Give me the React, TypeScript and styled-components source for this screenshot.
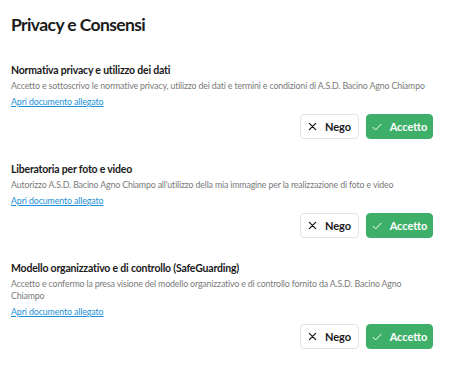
import styled, { createGlobalStyle } from "styled-components";

const GlobalStyle = createGlobalStyle`
  body {
    margin: 0;
    background: #ffffff;
    font-family: Lato, "Noto Sans", sans-serif;
    color: #1a1a1a;
  }
`;

const consents = [
  {
    title: "Normativa privacy e utilizzo dei dati",
    text: "Accetto e sottoscrivo le normative privacy, utilizzo dei dati e termini e condizioni di A.S.D. Bacino Agno Chiampo",
  },
  {
    title: "Liberatoria per foto e video",
    text: "Autorizzo A.S.D. Bacino Agno Chiampo all'utilizzo della mia immagine per la realizzazione di foto e video",
  },
  {
    title: "Modello organizzativo e di controllo (SafeGuarding)",
    text: "Accetto e confermo la presa visione del modello organizzativo e di controllo fornito da A.S.D. Bacino Agno Chiampo",
  },
];

const XIcon = () => (
  <svg width="9" height="9" viewBox="0 0 10 10" fill="none" stroke="currentColor" strokeWidth="1.4" strokeLinecap="round">
    <path d="M1.5 1.5l7 7M8.5 1.5l-7 7" />
  </svg>
);

const CheckIcon = () => (
  <svg width="10" height="8" viewBox="0 0 11 9" fill="none" stroke="currentColor" strokeWidth="1.1" strokeLinecap="round" strokeLinejoin="round">
    <path d="M1 4.8l3 3 6-6.4" />
  </svg>
);

const App = () => {
  return (
    <Page>
      <GlobalStyle />
      <Title>Privacy e Consensi</Title>
      <List>
        {consents.map((c) => (
          <Section key={c.title}>
            <Heading>{c.title}</Heading>
            <Desc>{c.text}</Desc>
            <DocLink href="#">Apri documento allegato</DocLink>
            <Actions>
              <Button>
                <XIcon />
                Nego
              </Button>
              <Button $primary>
                <CheckIcon />
                Accetto
              </Button>
            </Actions>
          </Section>
        ))}
      </List>
    </Page>
  );
};
export default App;

const Page = styled.div`
  width: 449px;
  padding: 14px 16px 0 11px;
  box-sizing: border-box;
`;

const Title = styled.h1`
  margin: 0;
  font-size: 17.5px;
  font-weight: 700;
  line-height: 22px;
  letter-spacing: -0.6px;
`;

const List = styled.div`
  display: flex;
  flex-direction: column;
  gap: 23px;
  margin-top: 27px;
`;

const Section = styled.div`
  display: flex;
  flex-direction: column;
`;

const Heading = styled.div`
  font-size: 10.5px;
  font-weight: 700;
  line-height: 14px;
  letter-spacing: -0.2px;
`;

const Desc = styled.div`
  margin-top: 3px;
  font-size: 8.8px;
  line-height: 12px;
  letter-spacing: -0.15px;
  color: #7a7a7a;
`;

const DocLink = styled.a`
  margin-top: 4px;
  font-size: 8.8px;
  line-height: 12px;
  letter-spacing: -0.1px;
  color: #1b8fd6;
  text-decoration: underline;
  align-self: flex-start;
`;

const Actions = styled.div`
  display: flex;
  justify-content: flex-end;
  gap: 7px;
  margin-top: 6px;
`;

const Button = styled.button<{ $primary?: boolean }>`
  display: inline-flex;
  align-items: center;
  justify-content: center;
  gap: 8px;
  box-sizing: border-box;
  height: 25px;
  padding: 0;
  width: ${(p) => (p.$primary ? "67px" : "59px")};
  border-radius: 4px;
  border: 1px solid ${(p) => (p.$primary ? "#3daf68" : "#e4e4e4")};
  background: ${(p) => (p.$primary ? "#3daf68" : "#ffffff")};
  color: ${(p) => (p.$primary ? "#ffffff" : "#1a1a1a")};
  font-family: Lato, "Noto Sans", sans-serif;
  font-size: 11px;
  font-weight: 700;
  cursor: pointer;
`;
